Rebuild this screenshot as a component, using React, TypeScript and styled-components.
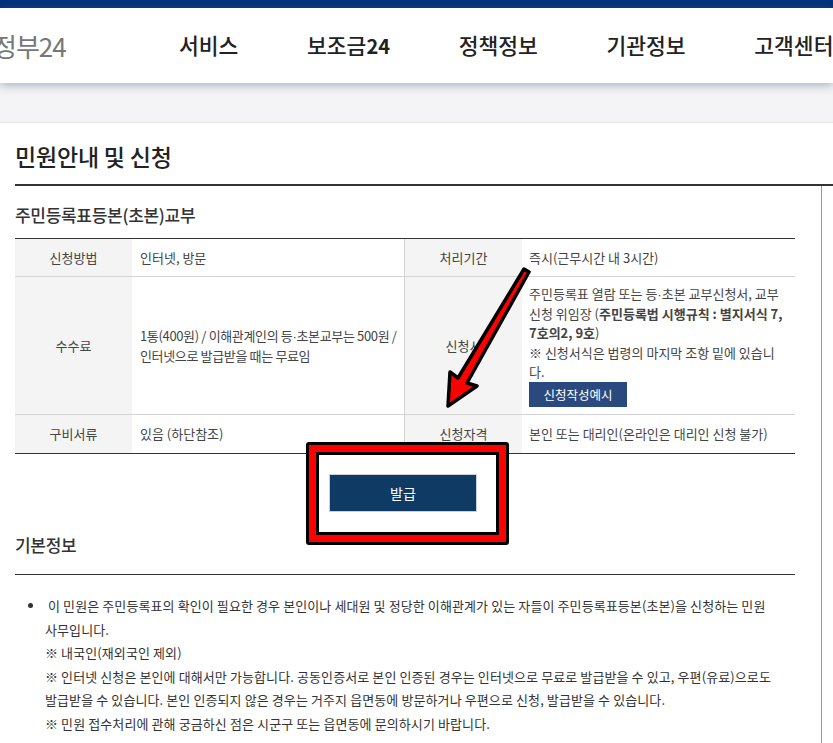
import React from "react";
import styled, { createGlobalStyle } from "styled-components";

const GlobalStyle = createGlobalStyle`
  html, body {
    margin: 0;
    padding: 0;
    background: #fff;
  }
  body {
    font-family: "Noto Sans CJK KR", "Liberation Sans", sans-serif;
    color: #333;
  }
`;

const Page = styled.div`
  position: relative;
  width: 833px;
  height: 743px;
  overflow: hidden;
`;

const TopBar = styled.div`
  height: 8px;
  background: #03317a;
`;

const Header = styled.header`
  position: relative;
  display: flex;
  align-items: center;
  height: 75px;
  padding-left: 179px;
  background: #fff;
  box-shadow: 0 2px 9px rgba(70, 90, 130, 0.45);
`;

// the logo is cut off by the left edge of the window
const Logo = styled.div`
  position: absolute;
  left: -7px;
  top: 20px;
  font-size: 26px;
  line-height: 36px;
  letter-spacing: -1px;
  color: #777;
  white-space: nowrap;
`;

const Nav = styled.nav`
  display: flex;
  gap: 68.7px;
  white-space: nowrap;
`;

const NavItem = styled.a`
  font-size: 21.5px;
  font-weight: 500;
  line-height: 30px;
  color: #222;
`;

const NavDigits = styled.span`
  font-size: 20px;
  font-weight: 700;
`;

const Band = styled.div`
  height: 39px;
  background: #f4f3f5;
  border-bottom: 1px solid #e8e8e8;
`;

const Content = styled.main`
  padding-left: 15px;
`;

const PageTitle = styled.h1`
  margin: 0;
  height: 63px;
  box-sizing: border-box;
  padding-top: 16px;
  font-size: 23px;
  font-weight: 500;
  line-height: 34px;
  letter-spacing: -0.2px;
  color: #222;
  border-bottom: 2px solid #333;
`;

const Body = styled.div`
  width: 806px;
  min-height: 560px;
  border-right: 1px solid #999;
`;

const Column = styled.div`
  width: 780px;
`;

const SectionTitle = styled.h2`
  margin: 0;
  padding-top: 16px;
  height: 53px;
  box-sizing: border-box;
  font-size: 17px;
  font-weight: 500;
  line-height: 25px;
  letter-spacing: -0.3px;
  color: #333;
  border-bottom: 1px solid #333;
`;

const InfoTable = styled.div`
  display: grid;
  grid-template-columns: 117px 273px 117px 273px;
  grid-template-rows: 38px 138px 38px;
  font-size: 13px;
  line-height: 19.2px;
  word-break: keep-all;
  border-bottom: 1px solid #333;
`;

const Label = styled.div<{ $last?: boolean }>`
  display: flex;
  align-items: center;
  justify-content: center;
  background: #f4f4f4;
  color: #444;
  border-bottom: ${(p) => (p.$last ? "none" : "1px solid #d4d4d4")};
`;

const Cell = styled.div<{ $last?: boolean; $divider?: boolean; $tight?: boolean }>`
  display: flex;
  flex-direction: column;
  justify-content: center;
  align-items: flex-start;
  padding: 0 ${(p) => (p.$tight ? "4px" : "10px")} 0 ${(p) => (p.$divider ? "8px" : "7px")};
  color: #444;
  letter-spacing: ${(p) => (p.$tight ? "-0.35px" : "0")};
  border-bottom: ${(p) => (p.$last ? "none" : "1px solid #d4d4d4")};
  border-right: ${(p) => (p.$divider ? "1px solid #d4d4d4" : "none")};
`;

const Dot = styled.span`
  font-family: "Liberation Sans", sans-serif;
`;

// this sentence wraps inside the last word, unlike the rest of the table
const LooseWrap = styled.span`
  word-break: normal;
`;

const SmallButton = styled.a`
  display: block;
  width: 98px;
  height: 25px;
  margin-top: 1px;
  background: #2a4a7f;
  color: #fff;
  font-size: 12.5px;
  line-height: 25px;
  text-align: center;
`;

const ButtonRow = styled.div`
  display: flex;
  justify-content: center;
  padding: 20px 4px 1px 0;
`;

const IssueButton = styled.a`
  position: relative;
  z-index: 1;
  display: block;
  width: 148px;
  height: 38px;
  background: #0f3a63;
  border: 1px solid #c8d0d8;
  box-sizing: border-box;
  color: #fff;
  font-size: 14px;
  line-height: 36px;
  text-align: center;
`;

const BasicTitle = styled.h2`
  margin: 0;
  padding-top: 19px;
  height: 62px;
  box-sizing: border-box;
  font-size: 17px;
  font-weight: 500;
  line-height: 25px;
  letter-spacing: -0.3px;
  color: #333;
  border-bottom: 1px solid #333;
`;

const Guide = styled.ul`
  margin: 19px 0 0;
  padding: 0 0 0 30px;
  width: 730px;
  font-size: 13px;
  line-height: 23.5px;
  letter-spacing: 0.1px;
  word-break: keep-all;
  color: #333;
`;

// annotation drawn over the screenshot
const Highlight = styled.div`
  position: absolute;
  left: 306px;
  top: 442px;
  width: 203px;
  height: 103px;
  box-sizing: border-box;
  border: 3px solid #000;
  border-radius: 3px;
  background: #f00;
  padding: 7px;
`;

const HighlightInner = styled.div`
  height: 100%;
  box-sizing: border-box;
  border: 3px solid #000;
  background: #fff;
`;

const ArrowSvg = styled.svg`
  position: absolute;
  left: 0;
  top: 0;
  pointer-events: none;
`;

export default function App() {
  return (
    <Page>
      <GlobalStyle />
      <TopBar />
      <Header>
        <Logo>정부24</Logo>
        <Nav>
          <NavItem>서비스</NavItem>
          <NavItem>보조금<NavDigits>24</NavDigits></NavItem>
          <NavItem>정책정보</NavItem>
          <NavItem>기관정보</NavItem>
          <NavItem>고객센터</NavItem>
        </Nav>
      </Header>
      <Band />
      <Content>
        <PageTitle>민원안내 및 신청</PageTitle>
        <Body>
          <Column>
            <SectionTitle>주민등록표등본(초본)교부</SectionTitle>
            <InfoTable>
              <Label>신청방법</Label>
              <Cell $divider>인터넷, 방문</Cell>
              <Label>처리기간</Label>
              <Cell>즉시(근무시간 내 3시간)</Cell>
              <Label>수수료</Label>
              <Cell $divider $tight>
                <div>1통(400원) / 이해관계인의 등<Dot>·</Dot>초본교부는 500원 / 인터넷으로 발급받을 때는 무료임</div>
              </Cell>
              <Label>신청서</Label>
              <Cell>
                <div>
                  주민등록표 열람 또는 등<Dot>·</Dot>초본 교부신청서, 교부 신청 위임장 (
                  <b>주민등록법 시행규칙 : 별지서식 7, 7호의2, 9호</b>)
                  <br />
                  <LooseWrap>※ 신청서식은 법령의 마지막 조항 밑에 있습니다.</LooseWrap>
                </div>
                <SmallButton>신청작성예시</SmallButton>
              </Cell>
              <Label $last>구비서류</Label>
              <Cell $last $divider>있음 (하단참조)</Cell>
              <Label $last>신청자격</Label>
              <Cell $last>본인 또는 대리인(온라인은 대리인 신청 불가)</Cell>
            </InfoTable>
            <ButtonRow>
              <IssueButton>발급</IssueButton>
            </ButtonRow>
            <BasicTitle>기본정보</BasicTitle>
            <Guide>
              <li>
                &nbsp;이 민원은 주민등록표의 확인이 필요한 경우 본인이나 세대원 및 정당한 이해관계가 있는 자들이 주민등록표등본(초본)을 신청하는 민원 사무입니다.
                <br />※ 내국인(재외국인 제외)
                <br />※ 인터넷 신청은 본인에 대해서만 가능합니다. 공동인증서로 본인 인증된 경우는 인터넷으로 무료로 발급받을 수 있고, 우편(유료)으로도 발급받을 수 있습니다. 본인 인증되지 않은 경우는 거주지 읍면동에 방문하거나 우편으로 신청, 발급받을 수 있습니다.
                <br />※ 민원 접수처리에 관해 궁금하신 점은 시군구 또는 읍면동에 문의하시기 바랍니다.
              </li>
            </Guide>
          </Column>
        </Body>
      </Content>
      <Highlight>
        <HighlightInner />
      </Highlight>
      <ArrowSvg width="833" height="743" viewBox="0 0 833 743">
        <path
          d="M524 269 L529 272 L467 383 L477 386 L448 406 L450 372 L458 378 Z"
          fill="#f00"
          stroke="#000"
          strokeWidth="3.5"
          strokeLinejoin="round"
        />
      </ArrowSvg>
    </Page>
  );
}
